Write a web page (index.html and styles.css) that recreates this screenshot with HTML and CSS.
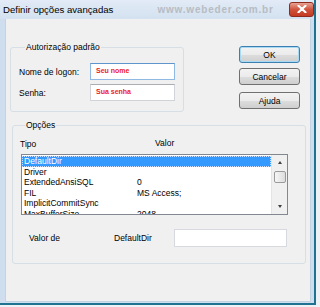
FILE: index.html
```html
<!DOCTYPE html>
<html lang="pt">
<head>
  <meta charset="UTF-8">
  <title>Definir opções avançadas</title>
  <link rel="stylesheet" href="styles.css">
</head>
<body>
  <div class="window">
    <div class="titlebar">
      <span class="title">Definir opções avançadas</span>
      <span class="watermark">www.webeder.com.br</span>
      <span class="close">
        <svg width="10" height="8" viewBox="0 0 10 8"><path d="M1.5 0.8 L8.5 7.2 M8.5 0.8 L1.5 7.2" stroke="#fff" stroke-width="2.2" stroke-linecap="round"/></svg>
      </span>
    </div>
    <div class="frame">
      <div class="client">
        <div class="top-row">
          <fieldset class="group group-auth">
            <legend>Autorização padrão</legend>
            <div class="field-row">
              <label>Nome de logon:</label>
              <div class="textbox focused">Seu nome</div>
            </div>
            <div class="field-row">
              <label>Senha:</label>
              <div class="textbox">Sua senha</div>
            </div>
          </fieldset>
          <div class="buttons">
            <button class="default">OK</button>
            <button>Cancelar</button>
            <button class="help">Ajuda</button>
          </div>
        </div>

        <fieldset class="group group-options">
          <legend>Opções</legend>
          <div class="list-head">
            <span class="col-type">Tipo</span>
            <span>Valor</span>
          </div>
          <div class="listbox">
            <div class="rows">
              <div class="row selected"><span class="col-type">DefaultDir</span></div>
              <div class="row"><span class="col-type">Driver</span></div>
              <div class="row"><span class="col-type">ExtendedAnsiSQL</span><span>0</span></div>
              <div class="row"><span class="col-type">FIL</span><span>MS Access;</span></div>
              <div class="row"><span class="col-type">ImplicitCommitSync</span></div>
              <div class="row"><span class="col-type">MaxBufferSize</span><span>2048</span></div>
            </div>
            <div class="scrollbar">
              <span class="arrow up"></span>
              <span class="thumb"></span>
              <span class="arrow down"></span>
            </div>
          </div>
          <div class="value-row">
            <span class="value-label">Valor de</span>
            <span class="value-name">DefaultDir</span>
            <div class="textbox value-box"></div>
          </div>
        </fieldset>
      </div>
    </div>
  </div>
</body>
</html>
```

FILE: styles.css
```css
* { margin: 0; padding: 0; box-sizing: border-box; }
body {
  width: 320px;
  height: 307px;
  background: #eef2f6;
  font-family: 'Liberation Sans', Arial, sans-serif;
  font-size: 8.5px;
  color: #000;
  overflow: hidden;
}
.window {
  width: 316px;
  height: 305px;
  background: #cfdeee;
  border-right: 2px solid #1f7391;
  border-bottom: 2px solid #1f7391;
  display: flex;
  flex-direction: column;
}
.titlebar {
  height: 19px;
  flex: none;
  display: flex;
  align-items: center;
  padding-left: 3px;
  background: linear-gradient(#e2ebf6, #d3e1f0);
}
.title {
  font-size: 9.6px;
  color: #000;
}
.watermark {
  margin-left: 44px;
  font-size: 10px;
  font-weight: bold;
  letter-spacing: 0.8px;
  color: #b7bcc4;
}
.close {
  margin-left: auto;
  width: 25px;
  height: 15px;
  margin-top: -1px;
  border: 1px solid #8d2b1e;
  border-radius: 3px;
  background: linear-gradient(#e8a294, #d0533d 50%, #c33a22);
  display: flex;
  align-items: center;
  justify-content: center;
}
.frame {
  flex: 1;
  padding: 0 3px 1px 5px;
  display: flex;
}
.client {
  flex: 1;
  background: #f0f0f0;
  border: 1px solid #c3d3e3;
  border-top: none;
  padding: 22px 0 0 4px;
}
.top-row {
  display: flex;
  align-items: flex-start;
}
.group {
  border: 1px solid #d5dfe5;
  border-radius: 3px;
}
.group legend {
  font-size: 8.5px;
  line-height: 12px;
  padding: 0 1px;
  margin-left: 6px;
}
.group-auth {
  width: 174px;
  padding: 10px 8px 10px 8px;
}
.field-row {
  display: flex;
  align-items: center;
  justify-content: space-between;
}
.field-row + .field-row {
  margin-top: 4px;
}
.textbox {
  width: 85px;
  height: 17px;
  background: #fff;
  border: 1px solid #d0d3d8;
  border-top-color: #abadb3;
  color: #ec1b23;
  font-weight: bold;
  font-size: 7px;
  padding: 3px 0 0 5px;
}
.textbox.focused {
  border-color: #8fb8e2;
  border-top-color: #5f95cc;
}
.buttons {
  margin-left: 55px;
  margin-top: 5px;
  display: flex;
  flex-direction: column;
  gap: 5px;
}
.buttons button {
  width: 61px;
  height: 17px;
  font-family: inherit;
  font-size: 8.5px;
  color: #000;
  border: 1px solid #707070;
  border-radius: 3px;
  background: linear-gradient(#f3f3f3, #ebebeb 50%, #dddddd 51%, #cfcfcf);
}
.buttons button.default {
  border-color: #3c7fb1;
  box-shadow: inset 0 0 0 1px #a8daf3;
}
.buttons button.help {
  margin-top: 2px;
}
.group-options {
  margin: 7px 0 0 2px;
  width: 294px;
  padding: 7px 17px 16px 6px;
}
.list-head {
  display: flex;
  line-height: 11px;
  padding-left: 1px;
}
.col-type {
  width: 136px;
  flex: none;
}
.list-head .col-type {
  width: 135px;
  padding-top: 1px;
}
.listbox {
  margin-top: 4px;
  margin-left: 2px;
  height: 61px;
  border: 1px solid #828790;
  background: #fff;
  display: flex;
  overflow: hidden;
}
.rows {
  flex: 1;
  padding-top: 1px;
}
.row {
  display: flex;
  height: 10.5px;
  line-height: 10.5px;
  padding-left: 2px;
  white-space: nowrap;
}
.row .col-type {
  width: 113px;
}
.row.selected {
  background: #3399ff;
  color: #fff;
  outline: 1px dotted #c8e0ff;
  outline-offset: -1px;
}
.scrollbar {
  width: 16px;
  flex: none;
  background: #f0f0f0;
  border-left: 1px solid #e4e4e4;
  display: flex;
  flex-direction: column;
  align-items: center;
}
.arrow {
  width: 0;
  height: 0;
  border-left: 2.5px solid transparent;
  border-right: 2.5px solid transparent;
}
.arrow.up {
  margin-top: 6px;
  border-bottom: 3px solid #404040;
}
.arrow.down {
  margin-top: auto;
  margin-bottom: 6px;
  border-top: 3px solid #404040;
}
.thumb {
  margin-top: 7px;
  width: 12px;
  height: 12px;
  border: 1px solid #9a9a9a;
  border-radius: 2px;
  background: linear-gradient(90deg, #f6f6f6, #dcdcdc);
}
.value-row {
  display: flex;
  align-items: center;
  margin-top: 14px;
}
.value-label {
  margin-left: 10px;
  width: 85px;
}
.value-name {
  width: 60px;
}
.value-box {
  width: 113px;
  height: 18px;
  border-color: #d6d9dd;
}
```
